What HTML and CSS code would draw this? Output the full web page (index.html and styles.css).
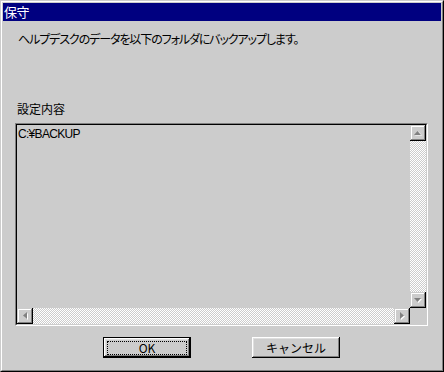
FILE: index.html
```html
<!DOCTYPE html>
<html lang="ja">
<head>
<meta charset="utf-8">
<link rel="stylesheet" href="styles.css">
</head>
<body>
<div class="window">
  <div class="frame">
    <div class="titlebar"><span class="title">保守</span></div>
    <div class="content">
      <p class="message">ヘルプデスクのデータを以下のフォルダにバックアップします。</p>
      <p class="label">設定内容</p>
      <div class="textbox">
        <div class="text">C:¥BACKUP</div>
        <div class="vscroll">
          <div class="sbtn">
            <svg width="8" height="5" viewBox="0 0 8 5"><path d="M1 1 L8 1 L4.5 5Z" transform="matrix(1 0 0 -1 0 5.5)" fill="#fff"/><path d="M3.5 0 L7 4 L0 4Z" fill="#808080"/></svg>
          </div>
          <div class="track"></div>
          <div class="sbtn">
            <svg width="8" height="5" viewBox="0 0 8 5"><path d="M1 1 L8 1 L4.5 5Z" fill="#fff"/><path d="M0 0 L7 0 L3.5 4Z" fill="#808080"/></svg>
          </div>
        </div>
        <div class="hscroll">
          <div class="sbtn">
            <svg width="5" height="8" viewBox="0 0 5 8"><path d="M5 1 L5 8 L1 4.5Z" fill="#fff"/><path d="M4 0 L4 7 L0 3.5Z" fill="#808080"/></svg>
          </div>
          <div class="track"></div>
          <div class="sbtn">
            <svg width="5" height="8" viewBox="0 0 5 8"><path d="M1 1 L1 8 L5 4.5Z" fill="#fff"/><path d="M0 0 L0 7 L4 3.5Z" fill="#808080"/></svg>
          </div>
        </div>
        <div class="corner"></div>
      </div>
      <div class="buttons">
        <button class="btn default">OK</button>
        <button class="btn">キャンセル</button>
      </div>
    </div>
  </div>
</div>
</body>
</html>
```
FILE: styles.css
```css
* { box-sizing: border-box; }
html, body {
  margin: 0;
  padding: 0;
  background: #cccccc;
}
body {
  font-family: "Noto Sans CJK JP", "Liberation Sans", sans-serif;
  font-size: 12px;
  color: #000;
}
.window {
  width: 444px;
  height: 372px;
  border: 1px solid;
  border-color: #cccccc #000 #000 #cccccc;
  background: #cccccc;
}
.frame {
  width: 100%;
  height: 100%;
  border: 1px solid;
  border-color: #fff #808080 #808080 #fff;
  padding: 1px;
  display: flex;
  flex-direction: column;
}
.titlebar {
  height: 18px;
  background: #000080;
  color: #fff;
  display: flex;
  align-items: center;
  padding-left: 1px;
  flex: none;
}
.title {
  font-size: 13px;
  line-height: 14px;
  letter-spacing: -0.5px;
}
.content {
  flex: 1;
  display: flex;
  flex-direction: column;
  padding: 10px 13px 0 12px;
}
.message {
  margin: 0 0 0 3px;
  line-height: 16px;
  font-feature-settings: "palt";
  letter-spacing: -1.1px;
  white-space: nowrap;
}
.label {
  margin: 54px 0 0 2px;
  line-height: 16px;
}
.textbox {
  margin-top: 6px;
  height: 203px;
  border: 1px solid;
  border-color: #808080 #fff #fff #808080;
  display: grid;
  grid-template-columns: 1fr 17px;
  grid-template-rows: 1fr 17px;
  position: relative;
}
.textbox::before {
  content: "";
  position: absolute;
  inset: 0;
  border: 1px solid;
  border-color: #000 #cccccc #cccccc #000;
  pointer-events: none;
}
.text {
  padding: 2px 0 0 1px;
  line-height: 14px;
  font-family: "Liberation Sans", "Noto Sans CJK JP", sans-serif;
  letter-spacing: -0.7px;
  grid-column: 1;
  grid-row: 1;
  margin: 1px 0 0 1px;
}
.vscroll {
  grid-column: 2;
  grid-row: 1;
  display: flex;
  flex-direction: column;
  margin-top: 1px;
  margin-right: 1px;
  width: 16px;
}
.hscroll {
  grid-column: 1;
  grid-row: 2;
  display: flex;
  margin-left: 1px;
  margin-bottom: 1px;
  height: 16px;
}
.corner {
  grid-column: 2;
  grid-row: 2;
}
.track {
  flex: 1;
  background: repeating-conic-gradient(#ffffff 0 25%, #cccccc 0 50%) 0 0 / 2px 2px;
}
.sbtn {
  width: 16px;
  height: 16px;
  flex: none;
  background: #cccccc;
  box-shadow: inset -1px -1px #000, inset 1px 1px #cccccc, inset -2px -2px #808080, inset 2px 2px #fff;
  display: flex;
  align-items: center;
  justify-content: center;
}
.sbtn svg { display: block; }
.buttons {
  display: flex;
  justify-content: center;
  gap: 61px;
  margin-top: 11px;
}
.btn {
  width: 88px;
  height: 21px;
  margin: 0;
  padding: 0;
  border: none;
  background: #cccccc;
  font-family: "Noto Sans CJK JP", "Liberation Sans", sans-serif;
  font-size: 12px;
  line-height: 14px;
  color: #000;
  box-shadow: inset -1px -1px #000, inset 1px 1px #fff, inset -2px -2px #808080, inset 2px 2px #dfdfdf;
  position: relative;
}
.btn.default {
  border: 1px solid #000;
}
.btn.default::after {
  content: "";
  position: absolute;
  left: 3px;
  right: 3px;
  top: 3px;
  bottom: 2px;
  border: 1px dotted #000;
}
```
